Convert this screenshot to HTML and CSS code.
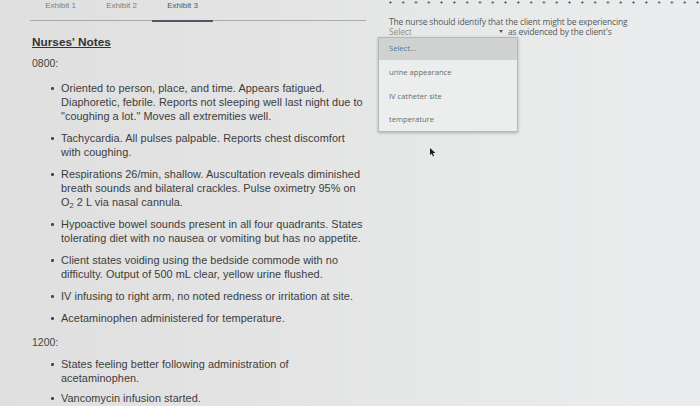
FILE: index.html
```html
<!DOCTYPE html>
<html>
<head>
<meta charset="utf-8">
<link rel="stylesheet" href="styles.css">
</head>
<body>
<div class="screen">
  <div class="left">
    <div class="tabs">
      <div class="tab">Exhibit 1</div>
      <div class="tab">Exhibit 2</div>
      <div class="tab active">Exhibit 3</div>
    </div>
    <div class="notes">
      <h2 class="title">Nurses' Notes</h2>
      <p class="time">0800:</p>
      <ul class="list">
        <li>Oriented to person, place, and time. Appears fatigued. Diaphoretic, febrile. Reports not sleeping well last night due to "coughing a lot." Moves all extremities well.</li>
        <li>Tachycardia. All pulses palpable. Reports chest discomfort with coughing.</li>
        <li>Respirations 26/min, shallow. Auscultation reveals diminished breath sounds and bilateral crackles. Pulse oximetry 95% on O<sub>2</sub> 2 L via nasal cannula.</li>
        <li>Hypoactive bowel sounds present in all four quadrants. States tolerating diet with no nausea or vomiting but has no appetite.</li>
        <li>Client states voiding using the bedside commode with no difficulty. Output of 500 mL clear, yellow urine flushed.</li>
        <li>IV infusing to right arm, no noted redness or irritation at site.</li>
        <li>Acetaminophen administered for temperature.</li>
      </ul>
      <p class="time time2">1200:</p>
      <ul class="list list2">
        <li>States feeling better following administration of acetaminophen.</li>
        <li>Vancomycin infusion started.</li>
      </ul>
    </div>
  </div>
  <div class="right">
    <div class="dots"></div>
    <div class="question">
      <p class="qline">The nurse should identify that the client might be experiencing</p>
      <div class="qrow">
        <span class="sel">Select</span>
        <span class="arrow"></span>
        <span class="after">as evidenced by the client's</span>
      </div>
      <div class="menu">
        <div class="menu-head">Select...</div>
        <div class="menu-item">urine appearance</div>
        <div class="menu-item">IV catheter site</div>
        <div class="menu-item">temperature</div>
      </div>
      <svg class="cursor" width="6" height="9" viewBox="0 0 6 9"><path d="M0 0 L0 7 L1.8 5.4 L3 8.5 L4 8 L2.9 5 L5.4 5 Z" fill="#1a1a1a"/></svg>
    </div>
  </div>
</div>
</body>
</html>
```

FILE: styles.css
```css
html, body {
  margin: 0;
  padding: 0;
}
body {
  width: 700px;
  height: 406px;
  overflow: hidden;
  background: linear-gradient(90deg, #dfdfdf 0%, #e3e4e3 40%, #e8eaea 70%, #ebeced 100%);
  font-family: "Liberation Sans", Arial, sans-serif;
  color: #3b3b3b;
}
.screen {
  display: flex;
  height: 406px;
}
.left {
  width: 378px;
  flex: none;
}
.tabs {
  display: flex;
  margin: 0 12px 0 30px;
  height: 20px;
  border-bottom: 1px solid #a9aaab;
}
.tab {
  width: 61px;
  text-align: center;
  font-size: 8px;
  color: #7d7d7d;
  line-height: 11px;
  position: relative;
}
.tab.active {
  color: #555;
}
.tab.active::after {
  content: "";
  position: absolute;
  left: 0;
  right: 0;
  bottom: -2px;
  height: 2px;
  background: #50566a;
}
.notes {
  padding-left: 32px;
}
.title {
  margin: 15px 0 0 0;
  font-size: 11.8px;
  font-weight: bold;
  text-decoration: underline;
  color: #333;
  line-height: 12px;
}
.time {
  margin: 9px 0 0 0;
  font-size: 10.5px;
  line-height: 12px;
  color: #444;
}
.time2 {
  margin-top: 11px;
}
.list {
  margin: 12px 0 0 0;
  padding-left: 29px;
  width: 304px;
  list-style: none;
}
.list2 {
  margin-top: 9px;
}
.list li {
  position: relative;
  font-size: 10.9px;
  line-height: 14px;
  margin-bottom: 8px;
  color: #3d3d3d;
  letter-spacing: 0.05px;
}
.list2 li {
  margin-bottom: 6px;
}
.list li::before {
  content: "";
  position: absolute;
  left: -10px;
  top: 6px;
  width: 2.5px;
  height: 2.5px;
  border-radius: 50%;
  background: #444;
}
sub {
  font-size: 7.5px;
  line-height: 0;
  vertical-align: -2px;
}
.right {
  flex: 1;
  position: relative;
}
.dots {
  height: 5px;
  margin-left: 6px;
  background-image: radial-gradient(circle, #5a5d5d 0.9px, transparent 1.3px);
  background-size: 12.8px 5px;
  background-position: 0 0;
}
.question {
  position: relative;
  padding-top: 12px;
  padding-left: 11px;
  font-family: "Open Sans", "Liberation Sans", sans-serif;
  color: #555a5a;
}
.qline {
  margin: 0;
  font-size: 8.5px;
  line-height: 10px;
  letter-spacing: -0.15px;
}
.qrow {
  display: flex;
  align-items: center;
  font-size: 8.5px;
  line-height: 9px;
  height: 9px;
  letter-spacing: -0.15px;
}
.sel {
  width: 110px;
  color: #8a8f8e;
}
.arrow {
  width: 0;
  height: 0;
  border-left: 2.5px solid transparent;
  border-right: 2.5px solid transparent;
  border-top: 3px solid #555;
  margin-right: 5px;
}
.after {
  color: #555a5a;
}
.menu {
  position: absolute;
  left: 0;
  top: 32px;
  width: 138px;
  border: 1px solid #b6b9b8;
  background: #eceeed;
  box-shadow: 0 1px 3px rgba(0,0,0,0.25);
  font-size: 7.6px;
}
.menu-head {
  height: 22px;
  line-height: 20px;
  padding-left: 10px;
  background: #cfd2d0;
  color: #4f7b95;
}
.menu-item {
  height: 23.5px;
  line-height: 24px;
  padding-left: 10px;
  color: #666b6a;
}
.cursor {
  position: absolute;
  left: 52px;
  top: 143px;
}
```
